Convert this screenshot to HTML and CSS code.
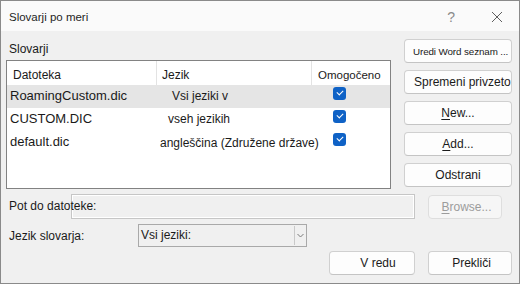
FILE: index.html
```html
<!DOCTYPE html>
<html lang="sl">
<head>
<meta charset="utf-8">
<title>Slovarji po meri</title>
<link rel="stylesheet" href="styles.css">
</head>
<body>
<div class="window">
  <div class="titlebar">
    <span class="title">Slovarji po meri</span>
    <span class="help">?</span>
    <svg class="close" width="12" height="12" viewBox="0 0 12 12"><path d="M1 1L11 11M11 1L1 11" stroke="#5f5f5f" stroke-width="1" fill="none"/></svg>
  </div>
  <div class="main">
    <div class="top">
      <div class="left">
        <div class="group-label">Slovarji</div>
        <div class="list">
          <div class="row head">
            <div class="c1">Datoteka</div>
            <div class="c2">Jezik</div>
            <div class="c3">Omogočeno</div>
          </div>
          <div class="row sel">
            <div class="c1 file">RoamingCustom.dic</div>
            <div class="c2 lang l1">Vsi jeziki v</div>
            <div class="c3"><span class="check"></span></div>
          </div>
          <div class="row">
            <div class="c1 file">CUSTOM.DIC</div>
            <div class="c2 lang l2">vseh jezikih</div>
            <div class="c3"><span class="check"></span></div>
          </div>
          <div class="row">
            <div class="c1 file">default.dic</div>
            <div class="c2 lang l3">angleščina (Združene države)</div>
            <div class="c3"><span class="check"></span></div>
          </div>
        </div>
      </div>
      <div class="side">
        <button class="btn small left-text">Uredi Word seznam ...</button>
        <button class="btn left-text big">Spremeni privzeto</button>
        <button class="btn"><u>N</u>ew...</button>
        <button class="btn"><u>A</u>dd...</button>
        <button class="btn">Odstrani</button>
      </div>
    </div>
    <div class="path-row">
      <span class="label path-label">Pot do datoteke:</span>
      <div class="input"></div>
      <button class="btn browse" disabled><u>B</u>rowse...</button>
    </div>
    <div class="lang-row">
      <span class="label lang-label">Jezik slovarja:</span>
      <div class="select">
        <span class="select-text">Vsi jeziki:</span>
        <span class="select-arrow"><svg width="7" height="5" viewBox="0 0 7 5"><path d="M0.5 1L3.5 4L6.5 1" stroke="#7a7a7a" fill="none"/></svg></span>
      </div>
    </div>
    <div class="actions">
      <button class="btn ok">V redu</button>
      <button class="btn cancel">Prekliči</button>
    </div>
  </div>
</div>
</body>
</html>
```

FILE: styles.css
```css
* { box-sizing: border-box; }
html, body { margin: 0; padding: 0; }
body {
  width: 520px;
  height: 284px;
  overflow: hidden;
  font-family: "Liberation Sans", Arial, sans-serif;
  color: #1a1a1a;
}
.window {
  width: 520px;
  height: 284px;
  border: 1px solid #8a8a8a;
  background: #f0f0f0;
  display: flex;
  flex-direction: column;
}
.titlebar {
  height: 30px;
  background: #fafafa;
  display: flex;
  align-items: center;
  padding-left: 8px;
  flex-shrink: 0;
}
.title {
  font-size: 11.5px;
  flex: 1;
  padding-top: 2px;
  color: #1f1f1f;
}
.help {
  font-size: 14px;
  color: #8a8a8a;
  margin-right: 36px;
  padding-top: 1px;
}
.close { margin-right: 16px; margin-top: 1px; }

.main {
  flex: 1;
  padding: 8px 7px 0 5px;
  display: flex;
  flex-direction: column;
}
.top {
  display: flex;
  gap: 13px;
}
.left {
  width: 385px;
  display: flex;
  flex-direction: column;
}
.group-label {
  height: 21px;
  line-height: 21px;
  font-size: 12px;
  padding-left: 3px;
}
.list {
  height: 129px;
  border: 1px solid #828282;
  background: #ffffff;
}
.row {
  height: 23px;
  display: grid;
  grid-template-columns: 149px 155px 1fr;
  align-items: start;
  white-space: nowrap;
}
.row > div { overflow: visible; min-width: 0; }
.row.head {
  height: 24px;
  align-items: stretch;
}
.row.head > div {
  font-size: 12px;
  padding: 7px 0 0 6px;
  line-height: 15px;
}
.row.head .c3 { font-size: 11.5px; }
.row.head .c2, .row.head .c3 {
  border-left: 1px solid #e3e3e3;
}
.row.head .c2 { padding-left: 5px; }
.row.sel { background: #e5e5e5; }
.file {
  font-size: 13px;
  line-height: 21px;
  padding-left: 3px;
}
.lang {
  font-size: 12px;
  line-height: 23px;
}
.l1 { padding-left: 16px; }
.l2 { padding-left: 12px; }
.l3 { padding-left: 4px; line-height: 24px; }
.c3 { padding: 2px 0 0 22px; }
.check {
  display: block;
  width: 13px;
  height: 13px;
  border-radius: 3px;
  background: #0f62c6;
  position: relative;
}
.check::after {
  content: "";
  position: absolute;
  left: 4px;
  top: 3px;
  width: 5px;
  height: 3px;
  border-left: 1px solid #fff;
  border-bottom: 1px solid #fff;
  transform: rotate(-45deg);
}

.side {
  width: 108px;
  display: flex;
  flex-direction: column;
  gap: 7px;
}
.btn {
  height: 24px;
  border: 1px solid #d0d0d0;
  border-bottom-color: #c4c4c4;
  border-radius: 4px;
  background: #fdfdfd;
  font-family: "Liberation Sans", Arial, sans-serif;
  font-size: 12px;
  color: #1a1a1a;
  padding: 0;
  text-align: center;
  white-space: nowrap;
  overflow: hidden;
}
.btn u { text-underline-offset: 2px; }
.btn.left-text { text-align: left; padding-left: 10px; }
.btn.small { font-size: 9.8px; padding-left: 8px; letter-spacing: -0.1px; }
.btn.big { font-size: 12px; padding-left: 9px; }

.path-row {
  display: flex;
  align-items: center;
  margin-top: 4px;
  height: 26px;
}
.label {
  font-size: 12px;
  padding-left: 3px;
  white-space: nowrap;
}
.path-label {
  width: 65px;
  flex-shrink: 0;
  overflow: visible;
  position: relative;
  z-index: 1;
}
.input {
  width: 344px;
  height: 25px;
  border: 1px solid #c6c6c6;
  box-shadow: inset 0 0 0 1px #ffffff;
  background: #f0f0f0;
}
.btn.browse {
  margin-left: 13px;
  width: 74px;
  height: 24px;
  background: #f6f6f6;
  border-color: #dedede;
  color: #9c9c9c;
  margin-top: 1px;
  padding-left: 3px;
}
.lang-row {
  display: flex;
  align-items: center;
  margin-top: 5px;
  height: 23px;
}
.lang-label { width: 132px; flex-shrink: 0; }
.select {
  width: 169px;
  height: 23px;
  border: 1px solid #a9a9a9;
  background: #f0f0f0;
  display: flex;
  align-items: center;
}
.select-text {
  flex: 1;
  font-size: 12px;
  padding-left: 2px;
  padding-bottom: 2px;
}
.select-arrow {
  width: 12px;
  height: 19px;
  border-left: 1px solid #c9c9c9;
  display: flex;
  align-items: center;
  justify-content: center;
}
.actions {
  display: flex;
  justify-content: flex-end;
  gap: 13px;
  margin-top: 4px;
}
.btn.ok { width: 86px; padding-left: 12px; }
.btn.cancel { width: 84px; padding-left: 3px; }
```
